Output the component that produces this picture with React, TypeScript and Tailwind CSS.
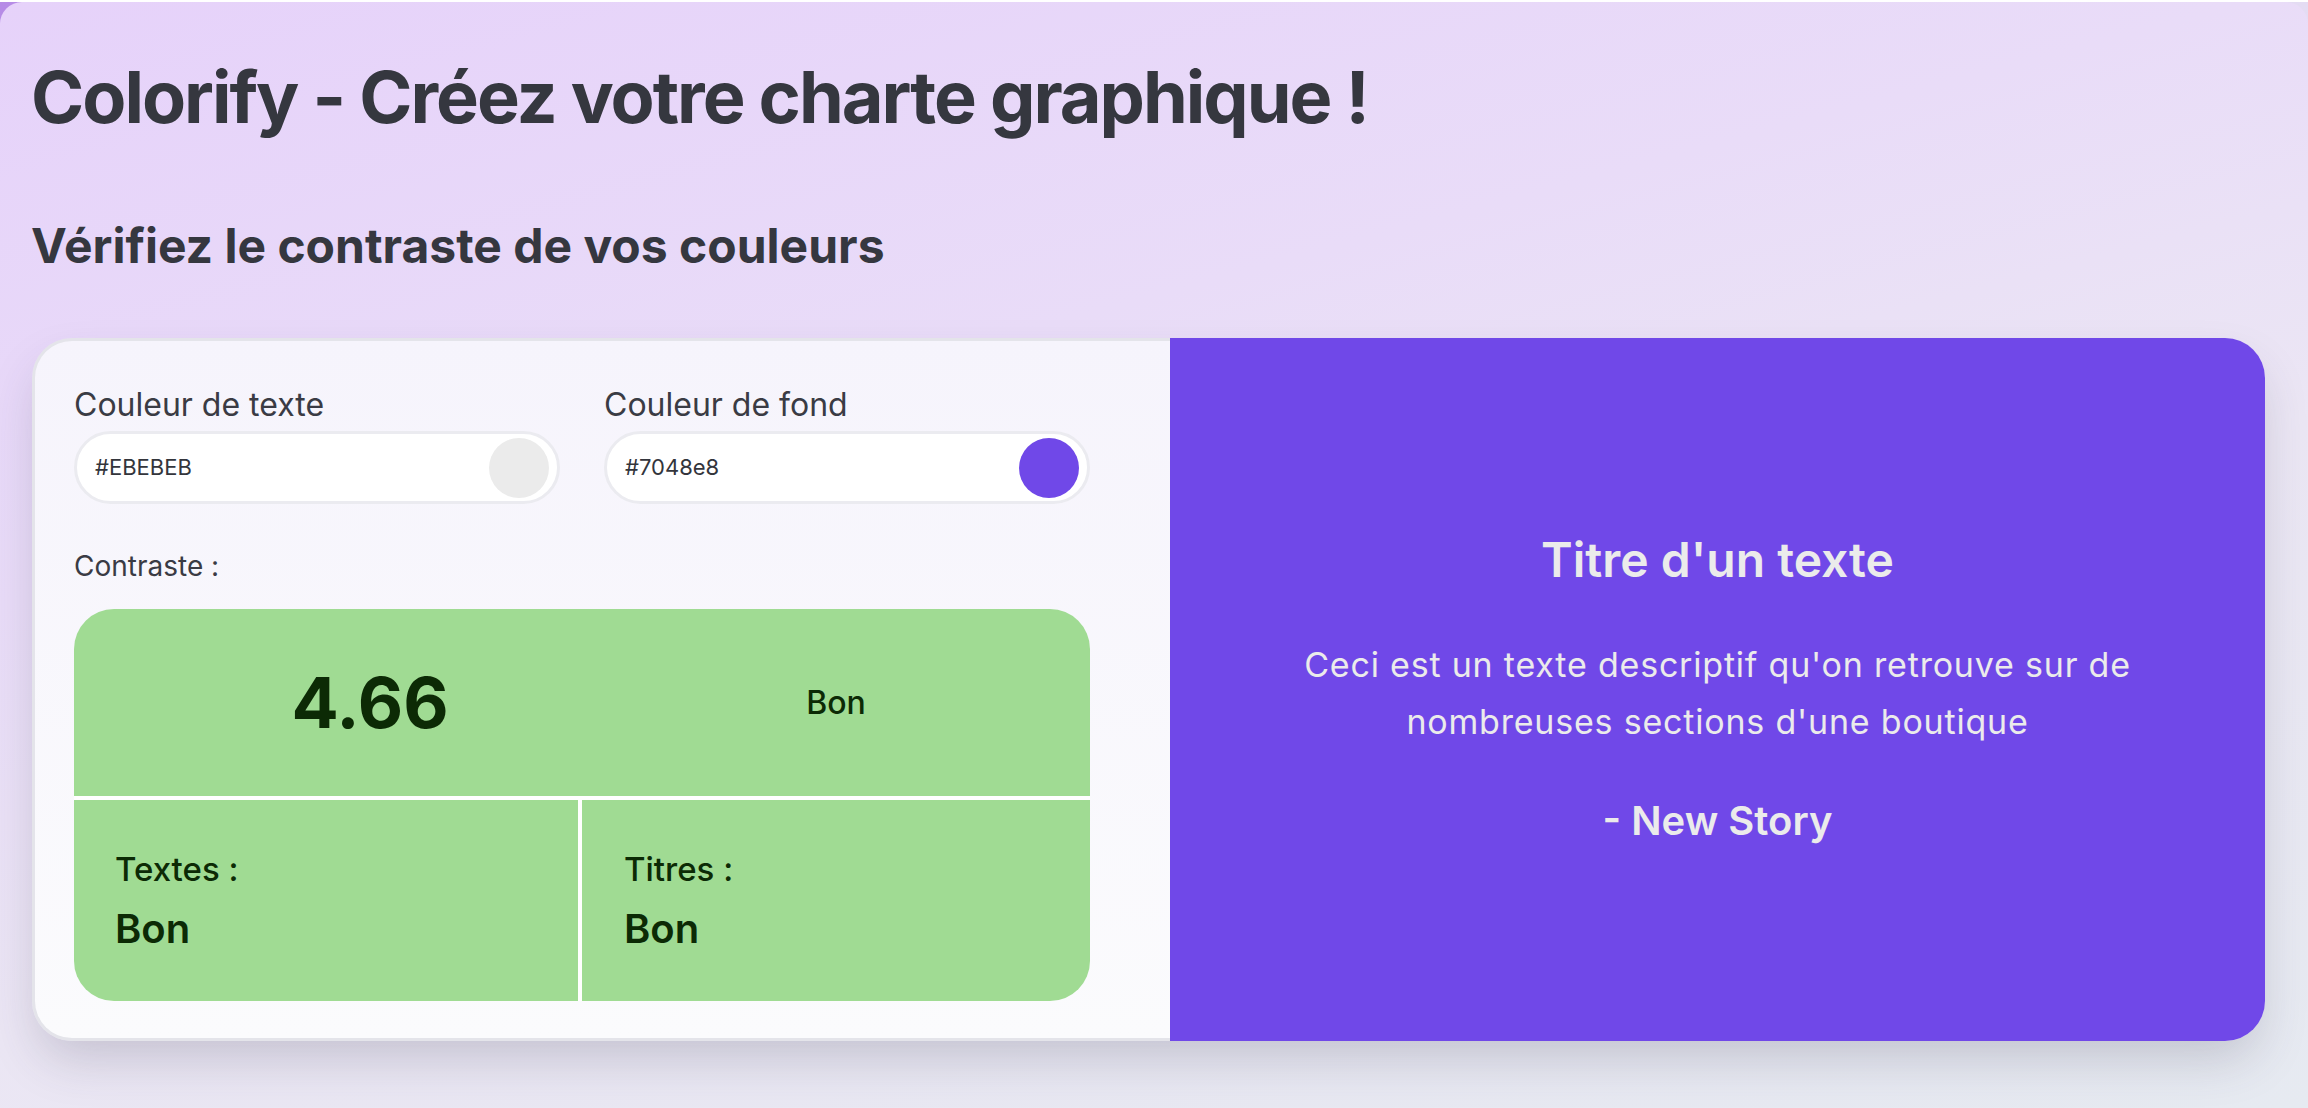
import React from "react";

function ColorInput({ label, value, swatch }: { label: string; value: string; swatch: string }) {
  return (
    <div className="flex flex-col">
      <label className="text-[32px] leading-[48px] text-[#3a3b44] font-normal">{label}</label>
      <div className="mt-[2px] flex h-[73px] items-center justify-between rounded-full border-[3px] border-[#ebebf0] bg-white pl-[18px] pr-[8px]">
        <span className="text-[22px] text-[#33353c]">{value}</span>
        <span className="h-[60px] w-[60px] rounded-full" style={{ backgroundColor: swatch }} />
      </div>
    </div>
  );
}

export default function App() {
  return (
    <div
      className="min-h-[1108px] w-full bg-[linear-gradient(90deg,#b68be6,#d8c6f1_40%,#e4dcf3)]"
      style={{ fontFamily: "Inter, 'Noto Sans', sans-serif" }}
    >
      <div className="mt-[2px] min-h-[1106px] rounded-t-[22px] bg-[linear-gradient(165deg,#e6d2fa_0%,#e9dcf8_35%,#ebe6f4_60%,#e6eaf1_100%)]">
        <div className="pl-[31px] pt-[59px]">
          <h1 className="text-[72px] font-bold leading-none tracking-[-2px] text-[#35373f]">
            Colorify - Créez votre charte graphique !
          </h1>
          <h2 className="mt-[89px] text-[48px] font-bold leading-none tracking-[0px] text-[#35373f]">
            Vérifiez le contraste de vos couleurs
          </h2>
        </div>

        <div className="ml-[32px] mr-[43px] mt-[68px] flex h-[703px] rounded-[40px] shadow-[0_24px_50px_-8px_rgba(60,60,80,0.22)]">
          {/* Left panel */}
          <div className="flex w-[1138px] flex-col rounded-l-[40px] border-[3px] border-r-0 border-[#e4e4ea] bg-[linear-gradient(180deg,#f6f4fc,#fbfbfd)] pb-[37px] pl-[39px] pt-[40px]">
            <div className="grid w-[1016px] grid-cols-2 gap-[44px]">
              <ColorInput label="Couleur de texte" value="#EBEBEB" swatch="#EBEBEB" />
              <ColorInput label="Couleur de fond" value="#7048e8" swatch="#7048e8" />
            </div>

            <div className="mt-[42px] text-[28px] leading-[40px] text-[#3a3b44]">Contraste :</div>

            <div className="mt-[23px] flex w-[1016px] flex-1 flex-col overflow-hidden rounded-[40px] bg-[#a0db93] text-[#0c2a05]">
              <div className="grid h-[191px] grid-cols-2 items-center border-b-[4px] border-white">
                <div className="pl-[84px] text-center text-[70px] font-bold leading-none">4.66</div>
                <div className="text-center text-[32px] font-medium">Bon</div>
              </div>
              <div className="grid flex-1 grid-cols-2">
                <div className="flex flex-col justify-center border-r-[4px] border-white pl-[41px]">
                  <div className="text-[33px] font-medium leading-[48px]">Textes :</div>
                  <div className="mt-[8px] text-[40px] font-semibold leading-[56px]">Bon</div>
                </div>
                <div className="flex flex-col justify-center pl-[42px]">
                  <div className="text-[33px] font-medium leading-[48px]">Titres :</div>
                  <div className="mt-[8px] text-[40px] font-semibold leading-[56px]">Bon</div>
                </div>
              </div>
            </div>
          </div>

          {/* Right panel */}
          <div className="flex flex-1 flex-col items-center justify-center rounded-r-[40px] bg-[#7048e8] px-[64px] text-center text-[#ebebeb]">
            <div className="text-[48px] font-semibold leading-[60px]">Titre d'un texte</div>
            <p className="mt-[46px] max-w-[900px] text-[34px] leading-[57px] tracking-[0.8px]">
              Ceci est un texte descriptif qu'on retrouve sur de nombreuses sections d'une boutique
            </p>
            <div className="mt-[43px] text-[40px] font-semibold leading-[56px]">- New Story</div>
          </div>
        </div>
      </div>
    </div>
  );
}
